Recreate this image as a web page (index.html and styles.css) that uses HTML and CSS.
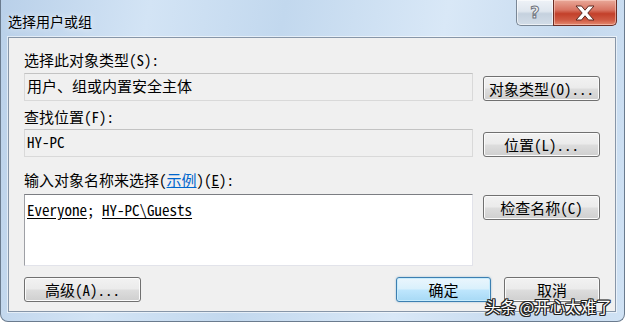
FILE: index.html
```html
<!DOCTYPE html>
<html lang="zh-CN">
<head>
<meta charset="utf-8">
<title>选择用户或组</title>
<link rel="stylesheet" href="styles.css">
</head>
<body>
<div class="window">
  <div class="titlebar">
    <span class="title">选择用户或组</span>
    <div class="caption">
      <div class="cap-help"><span class="qmark">?</span></div>
      <div class="cap-close">
        <svg width="22" height="16" viewBox="0 0 22 16">
          <path d="M2 1 H7.5 L11 5.2 L14.5 1 H20 L13.8 8 L20 15 H14.5 L11 10.8 L7.5 15 H2 L8.2 8 Z" fill="#ffffff" stroke="#5a2a22" stroke-width="1" stroke-linejoin="round"/>
        </svg>
      </div>
    </div>
  </div>
  <div class="client">
    <div class="label first">选择此对象类型(S):</div>
    <div class="row">
      <div class="field">用户、组或内置安全主体</div>
      <button class="btn">对象类型(O)...</button>
    </div>
    <div class="label second">查找位置(F):</div>
    <div class="row tight">
      <div class="field">HY-PC</div>
      <button class="btn">位置(L)...</button>
    </div>
    <div class="label third">输入对象名称来选择(<a class="link">示例</a>)(<u>E</u>):</div>
    <div class="row top">
      <div class="textarea"><u>Everyone</u>; <u>HY-PC\Guests</u></div>
      <button class="btn btn-check">检查名称(C)</button>
    </div>
    <div class="bottom">
      <button class="btn">高级(A)...</button>
      <button class="btn btn-default">确定</button>
      <button class="btn btn-cancel">取消</button>
    </div>
  </div>
  <div class="watermark">头条 @开心太难了</div>
</div>
</body>
</html>
```
FILE: styles.css
```css
html, body {
  margin: 0;
  padding: 0;
  background: #ffffff;
}

body {
  width: 625px;
  height: 322px;
  overflow: hidden;
}

.window {
  position: relative;
  box-sizing: border-box;
  width: 625px;
  height: 322px;
  border: 1px solid #6a7b8e;
  border-top: none;
  border-radius: 0 0 8px 8px;
  background: linear-gradient(100deg, #b9d0e9 0%, #d3e4f5 22%, #c2d8ee 42%, #d9e8f7 66%, #c5d9ee 86%, #d0e2f4 100%);
  display: flex;
  flex-direction: column;
  padding: 0 8px 0 7px;
  font-family: "Noto Sans Mono CJK SC", "Noto Sans CJK SC", sans-serif;
  color: #000;
}

.titlebar {
  height: 37px;
  display: flex;
  justify-content: space-between;
  align-items: flex-start;
}

.title {
  font-family: "Noto Sans CJK SC", sans-serif;
  font-size: 14px;
  line-height: 16px;
  padding-top: 13px;
  color: #000;
  text-shadow: 0 0 6px rgba(255,255,255,0.9);
}

.caption {
  display: flex;
  margin-right: -1px;
}

.cap-help {
  box-sizing: border-box;
  width: 37px;
  height: 26px;
  border: 1px solid #7a8796;
  border-top: none;
  border-right: none;
  border-radius: 0 0 0 5px;
  background: linear-gradient(#eef2f7 0%, #dfe6ee 45%, #c5d1de 55%, #d3dde8 100%);
  box-shadow: inset 0 0 0 1px rgba(255,255,255,0.6);
  display: flex;
  justify-content: center;
  align-items: center;
}

.qmark {
  font-family: "DejaVu Sans", sans-serif;
  font-weight: bold;
  font-size: 16px;
  line-height: 16px;
  color: #f4f4f4;
  -webkit-text-stroke: 1px #6e7580;
}

.cap-close {
  box-sizing: border-box;
  width: 64px;
  height: 26px;
  border: 1px solid #6b2d24;
  border-top: none;
  border-radius: 0 0 5px 0;
  background: linear-gradient(#e9a999 0%, #d87462 40%, #c3402a 55%, #cf5a43 80%, #e58a70 100%);
  box-shadow: inset 0 0 0 1px rgba(255,220,210,0.5);
  display: flex;
  justify-content: center;
  align-items: center;
}

.client {
  box-sizing: border-box;
  width: 608px;
  height: 275px;
  border: 1px solid #8796a8;
  box-shadow: 0 0 0 1px rgba(255,255,255,0.55);
  background: #f0f0f0;
  padding: 14px 15px 0 15px;
  display: flex;
  flex-direction: column;
  font-size: 15px;
}

.label {
  height: 16px;
  line-height: 16px;
  white-space: nowrap;
}

.label.second {
  margin-top: 8px;
}

.label.third {
  margin-top: 15px;
}

.link {
  color: #0066cc;
  text-decoration: underline;
}

.row {
  display: flex;
  gap: 10px;
  align-items: flex-end;
  margin-top: 5px;
}

.row.tight {
  margin-top: 4px;
}

.row.top {
  align-items: flex-start;
  margin-top: 6px;
}

.field {
  box-sizing: border-box;
  width: 449px;
  height: 28px;
  border: 1px solid #d9d9d9;
  border-top-color: #c3c3c3;
  background: #f0f0f0;
  padding: 0 2px;
  line-height: 24px;
  white-space: nowrap;
}

.textarea {
  box-sizing: border-box;
  width: 449px;
  height: 72px;
  border: 1px solid #e2e3ea;
  border-top-color: #7b7d82;
  border-left-color: #9ea0a5;
  background: #ffffff;
  padding: 3px 2px 0;
  line-height: 24px;
  white-space: nowrap;
}

.textarea u {
  text-underline-offset: 2px;
}

.btn {
  box-sizing: border-box;
  width: 117px;
  height: 25px;
  padding: 0;
  margin: 0;
  border: 1px solid #707070;
  border-radius: 3px;
  background: linear-gradient(#f2f2f2 0%, #ebebeb 48%, #dddddd 52%, #cfcfcf 100%);
  box-shadow: inset 0 0 0 1px #fbfbfb;
  font-family: "Noto Sans Mono CJK SC", "Noto Sans CJK SC", sans-serif;
  font-size: 15px;
  line-height: 21px;
  color: #000;
  text-align: center;
  white-space: nowrap;
}

.btn-check {
  margin-top: 1px;
}

.bottom {
  display: flex;
  margin-top: 11px;
}

.btn-default {
  width: 95px;
  margin-left: auto;
  border-color: #3c7fb1;
  background: linear-gradient(#eaf6fd 0%, #d9f0fc 48%, #bee6fd 52%, #a7d9f5 100%);
  box-shadow: inset 0 0 0 1px #c7ecfd, 0 0 2px rgba(60,127,177,0.5);
}

.btn-cancel {
  width: 96px;
  margin-left: 13px;
}

.watermark {
  position: absolute;
  left: 484px;
  top: 296px;
  font-family: "Noto Sans CJK SC", sans-serif;
  font-size: 15.5px;
  line-height: 20px;
  color: #ffffff;
  white-space: nowrap;
  text-shadow: 1px 0 0 #222, -1px 0 0 #222, 0 1px 0 #222, 0 -1px 0 #222, 1px 1px 0 #222, -1px -1px 0 #222, 1px -1px 0 #222, -1px 1px 0 #222;
}
```
